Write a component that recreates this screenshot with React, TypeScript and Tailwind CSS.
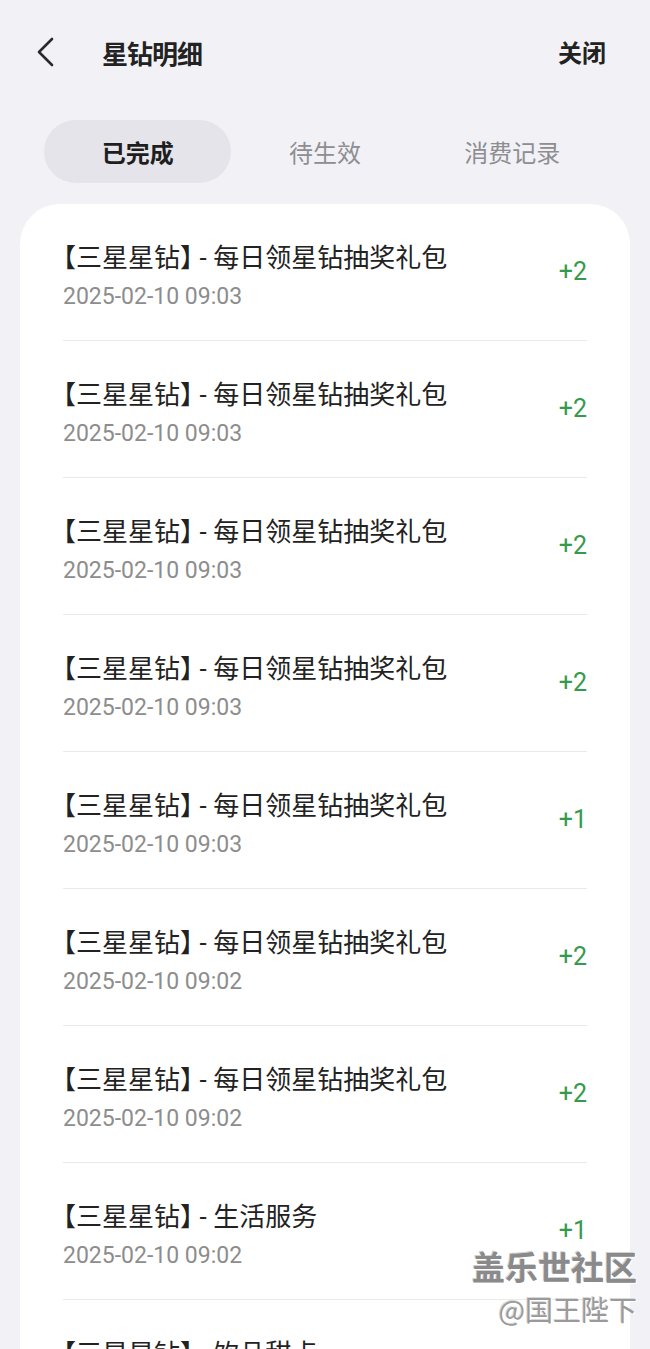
import React from "react";

const rows = [
  { t: "每日领星钻抽奖礼包", d: "2025-02-10 09:03", v: "+2" },
  { t: "每日领星钻抽奖礼包", d: "2025-02-10 09:03", v: "+2" },
  { t: "每日领星钻抽奖礼包", d: "2025-02-10 09:03", v: "+2" },
  { t: "每日领星钻抽奖礼包", d: "2025-02-10 09:03", v: "+2" },
  { t: "每日领星钻抽奖礼包", d: "2025-02-10 09:03", v: "+1" },
  { t: "每日领星钻抽奖礼包", d: "2025-02-10 09:02", v: "+2" },
  { t: "每日领星钻抽奖礼包", d: "2025-02-10 09:02", v: "+2" },
  { t: "生活服务", d: "2025-02-10 09:02", v: "+1" },
  { t: "饮品甜点", d: "2025-02-10 09:02", v: "+1" },
];

const cjk = "font-['Noto_Sans_CJK_SC','Noto_Sans',sans-serif]";
const num = "font-['Roboto','Noto_Sans_CJK_SC',sans-serif]";

export default function App() {
  return (
    <div className={`relative h-[1349px] w-[650px] overflow-hidden bg-[#f2f2f6] ${cjk}`}>
      {/* Header */}
      <div className="flex h-[104px] items-center pl-[36px] pr-[44px]">
        <svg width="20" height="30" viewBox="0 0 20 30" className="mr-[46px]">
          <path d="M16 2 L3 15 L16 28" fill="none" stroke="#2a2a2a" strokeWidth="2.6" strokeLinecap="round" strokeLinejoin="round" />
        </svg>
        <div className="text-[26px] font-bold tracking-[-1px] text-[#222]">星钻明细</div>
        <div className="ml-auto text-[24px] font-semibold text-[#222]">关闭</div>
      </div>

      {/* Tabs */}
      <div className="mt-[16px] grid grid-cols-3 px-[44px]">
        <div className="flex h-[63px] items-center justify-center rounded-full bg-[#e4e4ea] text-[24px] font-bold text-[#1e1e1e]">已完成</div>
        <div className="flex h-[63px] items-center justify-center text-[24px] text-[#8e8e92]">待生效</div>
        <div className="flex h-[63px] items-center justify-center text-[24px] text-[#8e8e92]">消费记录</div>
      </div>

      {/* Card */}
      <div className="mx-[20px] mt-[21px] rounded-[40px] bg-white px-[43px]">
        {rows.map((r, i) => (
          <div key={i} className="flex h-[137px] items-center justify-between border-b border-[#e9e9ec]">
            <div className="mt-[6px] flex flex-col">
              <div className="whitespace-nowrap text-[26px] leading-[32px] text-[#222]">
                <span className="[font-feature-settings:'halt']">【</span>
                三星星钻
                <span className="[font-feature-settings:'halt']">】</span>
                <span className={num}> - </span>
                {r.t}
              </div>
              <div className={`${num} mt-[9px] text-[23px] leading-[28px] text-[#8d8d8d]`}>{r.d}</div>
            </div>
            <div className={`${num} text-[25px] text-[#369a4c]`}>{r.v}</div>
          </div>
        ))}
      </div>

      {/* Watermark */}
      <div className="absolute right-[13px] top-[1246px] flex flex-col items-end">
        <div className="text-[33px] font-bold leading-[40px] text-[#8a8a8a] [text-shadow:1px_1px_0_#ffffff,-1px_-1px_0_#d0d0d0]">盖乐世社区</div>
        <div className="mt-[6px] text-[28px] leading-[34px] text-[#9a9a9a] [text-shadow:1px_1px_0_#ffffff,-1px_-1px_0_#d8d8d8]">@国王陛下</div>
      </div>
    </div>
  );
}
